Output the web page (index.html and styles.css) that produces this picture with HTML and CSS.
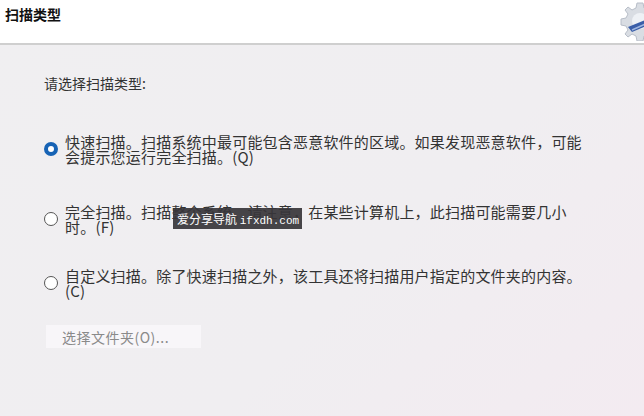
FILE: index.html
```html
<!DOCTYPE html>
<html lang="zh-CN">
<head>
<meta charset="UTF-8">
<title>扫描类型</title>
<link rel="stylesheet" href="styles.css">
</head>
<body>

<div class="header">
    <h1 class="title">扫描类型</h1>
    <svg class="gear" width="40" height="40" viewBox="0 0 40 40">
        <path d="M20 2 l3 0 1 5 4 2 4-3 3 3-3 4 2 4 5 1 0 6-5 1-2 4 3 4-3 3-4-3-4 2-1 5-6 0-1-5-4-2-4 3-3-3 3-4-2-4-5-1 0-6 5-1 2-4-3-4 3-3 4 3 4-2 1-5z" fill="#d9dde3" stroke="#b8bec8" stroke-width="1"/>
        <circle cx="20" cy="20" r="8" fill="#eef1f5"/>
        <path d="M8 26 L30 17 L34 22 L12 31 Z" fill="#3a5ea8"/>
        <path d="M12 29 L32 20" stroke="#9fb6e0" stroke-width="1.5"/>
    </svg>
</div>

<div class="content">
    <p class="prompt">请选择扫描类型:</p>

    <label class="option">
        <span class="radio checked"></span>
        <span class="option-text">快速扫描。扫描系统中最可能包含恶意软件的区域。如果发现恶意软件，可能<br>会提示您运行完全扫描。(Q)</span>
    </label>

    <label class="option option-full">
        <span class="radio"></span>
        <span class="option-text">完全扫描。扫描整个系统。请注意，在某些计算机上，此扫描可能需要几小<br>时。(F)</span>
    </label>

    <label class="option option-custom">
        <span class="radio"></span>
        <span class="option-text">自定义扫描。除了快速扫描之外，该工具还将扫描用户指定的文件夹的内容。<br>(C)</span>
    </label>

    <button class="folder-btn" disabled>选择文件夹(O)...</button>
</div>

<div class="watermark">爱分享导航 <span class="wm-url">ifxdh.com</span></div>

</body>
</html>
```

FILE: styles.css
```css
body {
    margin: 0;
    font-family: "Noto Sans CJK SC", "Liberation Sans", sans-serif;
    background: linear-gradient(135deg, #f0eff1 0%, #f0eef1 60%, #f3ebf1 100%);
    height: 416px;
    overflow: hidden;
    color: #333;
}
.header {
    height: 43px;
    background-color: #fff;
    border-bottom: 2px solid #cfcfcf;
    display: flex;
    justify-content: space-between;
    align-items: flex-start;
    overflow: hidden;
}
.title {
    margin: 5px 0 0 5px;
    font-size: 14px;
    font-weight: bold;
    line-height: 18px;
    color: #111;
}
.gear {
    margin-top: 1px;
    margin-right: -16px;
}
.content {
    padding-left: 44px;
}
.prompt {
    margin: 29px 0 0 0;
    font-size: 14px;
    line-height: 18px;
    color: #333;
}
.option {
    display: flex;
    align-items: center;
    margin-top: 42px;
    font-size: 15px;
    line-height: 15px;
    letter-spacing: 0.2px;
    white-space: nowrap;
}
.option-full {
    margin-top: 40px;
}
.option-custom {
    margin-top: 34px;
}
.radio {
    width: 14px;
    height: 14px;
    box-sizing: border-box;
    border: 1.5px solid #555;
    border-radius: 50%;
    background-color: #fff;
    margin-right: 7px;
    flex-shrink: 0;
}
.radio.checked {
    border: 4px solid #1763b5;
}
.folder-btn {
    display: block;
    margin: 27px 0 0 2px;
    width: 155px;
    height: 23px;
    padding: 0 0 0 16px;
    text-align: left;
    border: none;
    background-color: #f8f6f9;
    color: #8a8a8a;
    font-family: "Noto Sans CJK SC", sans-serif;
    font-size: 14px;
    letter-spacing: 0.5px;
}
.watermark {
    position: absolute;
    left: 173px;
    top: 208px;
    width: 129px;
    height: 21px;
    box-sizing: border-box;
    padding-left: 4px;
    background-color: rgba(55, 53, 57, 0.92);
    color: #fff;
    font-size: 12px;
    line-height: 21px;
    white-space: nowrap;
    overflow: hidden;
}
.wm-url {
    font-family: "Liberation Mono", monospace;
    font-size: 11px;
}
```
